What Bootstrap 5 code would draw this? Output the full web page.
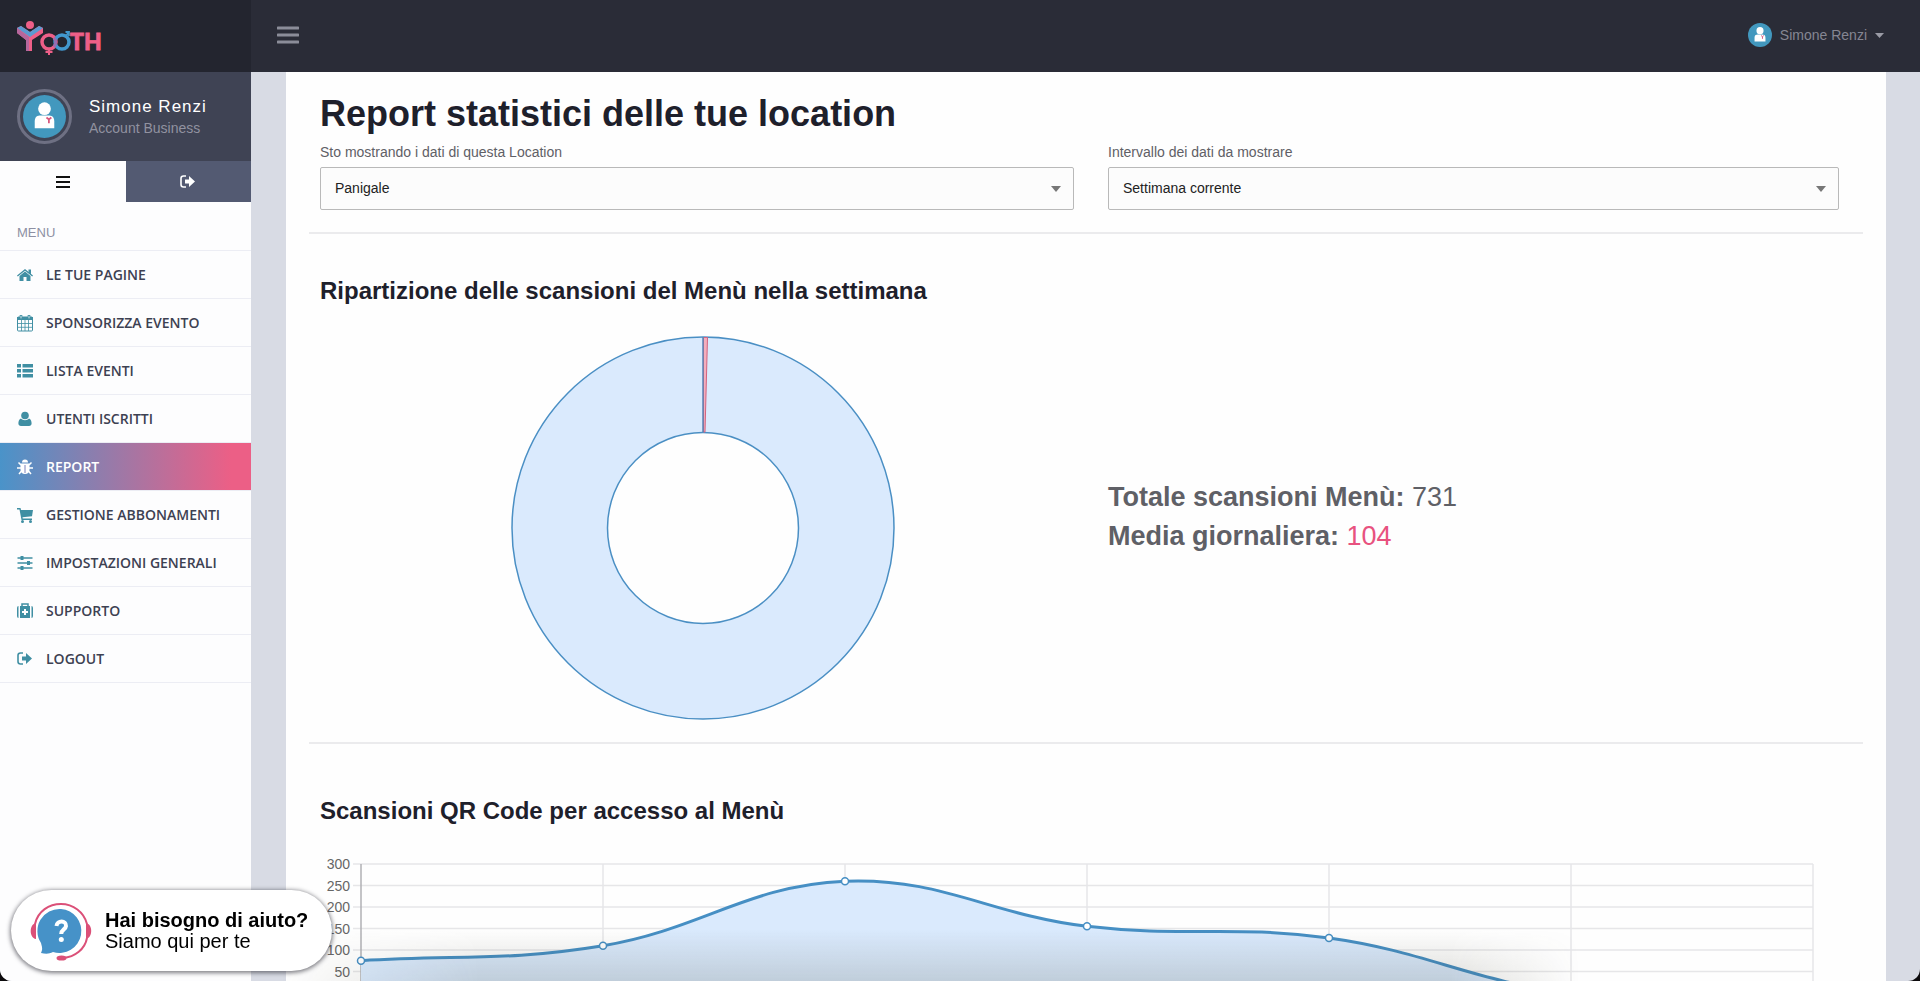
<!DOCTYPE html>
<html lang="it">
<head>
<meta charset="utf-8">
<meta name="viewport" content="width=device-width, initial-scale=1">
<title>Yooth - Report</title>
<link href="https://cdn.jsdelivr.net/npm/bootstrap@5.3.0/dist/css/bootstrap.min.css" rel="stylesheet">
<style>
html { background: #0c0a0c; height: 100%; overflow: hidden; }
body { font-family: "Liberation Sans", Arial, sans-serif; font-size: 14px; color: #5f6066; background: #d8dbe4; height: 100%; overflow: hidden; border-radius: 0 0 12px 12px; }
.side { width: 251px; background: #fdfdfe; flex: none; }
.brand { height: 72px; background: #23252f; padding: 20px 16px 0; }
.topbar { height: 72px; background: #2a2c37; padding: 0 36px 2px 24px; flex: none; }
.topbar .toggle { width: 24px; height: 20px; }
.who { color: #858692; }
.profile { height: 89px; background: #3f4354; padding: 0 17px; gap: 17px; }
.profile .name { font-size: 17px; line-height: 22px; letter-spacing: 1px; color: #fff; }
.profile .role { line-height: 20px; color: #9192a0; }
.ring { width: 55px; height: 55px; border: 3px solid #6e7083; border-radius: 50%; padding: 3px; }
.ring svg, .who svg { display: block; }
.tabs2 button { height: 41px; border: 0; background: #fdfdfe; color: #111; }
.tabs2 button + button { background: #535a72; color: #fff; }
.menu-title { height: 49px; padding: 20px 17px 0; font-size: 13px; line-height: 22px; color: #8d90a3; border-bottom: 1px solid #ecedf4; }
.side-menu a { display: flex; align-items: center; gap: 12px; height: 48px; padding: 0 16px; font: 600 14px "Open Sans", sans-serif; color: #3d4152; text-decoration: none; border-bottom: 1px solid #ecedf4; }
.side-menu a svg { width: 18px; height: 18px; color: #408fa3; flex: none; }
.side-menu a.active { color: #fff; background: linear-gradient(90deg, #4a93c9, #ec5f86 92%); }
.side-menu a.active svg { color: #fff; }
.sheet { background: #fefefe; margin: 0 34px 0 35px; padding: 0 23px; min-height: 0; overflow: hidden; }
.cell-l { padding-left: 11px; }
.cell-r { padding: 0 24px 0 22px; }
h1 { font-size: 36px; font-weight: 700; line-height: 44px; color: #1e202b; padding: 20px 11px 0; margin: 0 0 7px; }
h2 { font-size: 24px; font-weight: 700; line-height: 30px; color: #1e202b; padding: 0 11px; margin: 42px 0 30px; }
h2.later { margin: 52px 0 24px; }
.cell-l .form-select { width: calc(100% - 12px); }
.form-label { line-height: 18px; margin: 0 0 6px; display: block; }
.form-select { height: 43px; border: 1px solid #b9b9b9; border-radius: 2px; font-size: 14px; color: #222; padding: 0 32px 0 14px; background-color: #fcfcfc; background-image: url("data:image/svg+xml,%3Csvg xmlns='http://www.w3.org/2000/svg' viewBox='0 0 10 6'%3E%3Cpath d='M0 0h10L5 6z' fill='%23777'/%3E%3C/svg%3E"); background-size: 10px 6px; background-position: right 12px center; }
.rule { height: 2px; background: #ebebed; margin: 22px 0 0; }
.donut { width: 384px; max-width: 100%; height: auto; display: block; margin: 0 auto; }
.totals { font-size: 27px; line-height: 39px; padding-bottom: 22px; }
.totals .pink { color: #e8527f; }
.trend { display: block; width: 100%; height: auto; overflow: visible; font-family: "Liberation Sans", Arial, sans-serif; font-size: 14px; fill: #666; }
.help { position: fixed; left: 11px; bottom: 10px; height: 81px; width: 321px; border: 0; border-radius: 41px; background: #fff; box-shadow: 0 1px 4px 1px rgba(40,40,50,.6); padding: 0 16px 0 18px; gap: 10px; color: #000; text-align: left; font-size: 20px; line-height: 21px; }
.shade { position: fixed; left: 0; right: 340px; bottom: 0; height: 52px; pointer-events: none; background: linear-gradient(rgba(60,60,40,0), rgba(60,60,40,.16)); -webkit-mask-image: linear-gradient(90deg, transparent 280px, #000 480px, #000 calc(100% - 130px), transparent); mask-image: linear-gradient(90deg, transparent 280px, #000 480px, #000 calc(100% - 130px), transparent); }
</style>
</head>
<body class="d-flex">
<svg width="0" height="0" class="position-absolute" aria-hidden="true">
  <symbol id="avatar" viewBox="0 0 44 44"><circle cx="22" cy="22" r="22" fill="#4298be"/><circle cx="22" cy="14" r="6.500" fill="#fff"/><path d="M12 34v-7c0-5 3-6 6-6h8c3 0 6 1 6 6v7z" fill="#fff"/><path d="M24 23l2.500 2 2.500-2M26.500 25v4" stroke="#d9577c" stroke-width="1.800" fill="none"/></symbol>
  <symbol id="out" viewBox="0 0 18 18"><path d="M7 3H4.500A2.500 2.500 0 0 0 2 5.500v6A2.500 2.500 0 0 0 4.500 14H7" fill="none" stroke="currentColor" stroke-width="1.600"/><path d="M6 6.500h4V3l6 5.500-6 5.500v-3.500H6z" fill="currentColor"/></symbol>
</svg>

<aside class="side d-flex flex-column">
  <a class="brand d-block" href="#" aria-label="Yooth">
    <svg width="88" height="37" viewBox="0 0 88 37">
      <path d="M1 8l4-2 9 6 9-6 4 2v5l-11 7v11h-6V20L1 13z" fill="#ee5f88"/>
      <path d="M1 8l4-2 9 6 9-6 4 2-13 9z" fill="#5b9bd0"/>
      <path d="M1 8v5l9 7v11h3V17z" fill="#b5679d"/>
      <circle cx="14" cy="5" r="4" fill="#ee5f88"/>
      <circle cx="33" cy="22" r="7" fill="none" stroke="#ee5f88" stroke-width="3.500"/>
      <path d="M33 29v6M29.500 32h7" stroke="#ee5f88" stroke-width="2"/>
      <circle cx="46" cy="22" r="7" fill="none" stroke="#4298cf" stroke-width="3.500"/>
      <path d="M38 18a7 7 0 0 1 0 9" fill="none" stroke="#9a6cb0" stroke-width="3"/>
      <path d="M49 17l4-5M49.500 12H53v4" stroke="#4298cf" stroke-width="1.800" fill="none"/>
      <text x="54" y="30" font-family="Lato, sans-serif" font-weight="900" font-size="23" fill="#ee5f88" stroke="#ee5f88" stroke-width=".8">TH</text>
    </svg>
  </a>
  <div class="profile d-flex align-items-center">
    <div class="ring"><svg width="43" height="43"><use href="#avatar"/></svg></div>
    <div><div class="name">Simone Renzi</div><div class="role">Account Business</div></div>
  </div>
  <div class="tabs2 d-flex">
    <button class="w-50" type="button" aria-label="Menu"><svg width="14" height="12"><path d="M0 1h14M0 6h14M0 11h14" stroke="currentColor" stroke-width="2"/></svg></button>
    <button class="w-50" type="button" aria-label="Esci"><svg width="18" height="18"><use href="#out"/></svg></button>
  </div>
  <div class="menu-title">MENU</div>
  <nav class="side-menu">
    <a href="#"><svg viewBox="0 0 18 18" fill="currentColor"><path d="M9 5.500L3.500 10v5h4v-4h3v4h4v-5z"/><path d="M1 9.500L9 3l8 6.500-.8.900L9 4.700 1.800 10.400z"/><path d="M12.500 3.500h2.500v5l-2.500-2z"/></svg>LE TUE PAGINE</a>
    <a href="#"><svg viewBox="0 0 18 18" fill="none" stroke="currentColor"><rect x="1.500" y="3" width="15" height="14" rx="1"/><path d="M1 4.500h16" stroke-width="3"/><path d="M5.500 6v11M9 6v11M12.500 6v11M1 9.500h16M1 13.300h16" stroke-width=".8"/><path d="M5 1v4M13 1v4" stroke-width="2.600"/><path d="M5 1.800v2.600M13 1.800v2.600" stroke="#fff" stroke-width=".8"/></svg>SPONSORIZZA EVENTO</a>
    <a href="#"><svg viewBox="0 0 18 18" fill="currentColor"><path d="M1 2h4v3.500H1zM6.500 2H17v3.500H6.500zM1 7h4v3.500H1zM6.500 7H17v3.500H6.500zM1 12h4v3.500H1zM6.500 12H17v3.500H6.500z"/></svg>LISTA EVENTI</a>
    <a href="#"><svg viewBox="0 0 18 18" fill="currentColor"><circle cx="9" cy="5.500" r="3.800"/><path d="M5 8.500c2 2.200 6 2.200 8 0 2 .8 2.600 3 2.600 5 0 1.500-1 2.500-2.600 2.500H5c-1.600 0-2.600-1-2.600-2.500 0-2 .6-4.200 2.600-5z"/></svg>UTENTI ISCRITTI</a>
    <a href="#" class="active"><svg viewBox="0 0 18 18"><path d="M6 4.500a3 3 0 0 1 6 0zM4.500 5.500h9v6c0 3-2 4.500-4.500 4.500s-4.500-1.500-4.500-4.500z" fill="currentColor"/><path d="M5 7L2.500 4.500M13 7l2.500-2.500M5 10H1M13 10h4M5.500 13L3 16M12.500 13l2.500 3" stroke="currentColor" stroke-width="1.500"/><path d="M9 7v8" stroke="#7d82bb"/></svg>REPORT</a>
    <a href="#"><svg viewBox="0 0 18 18" fill="currentColor"><path d="M1 2h3.500l.5 2h12l-1 6.300-9.500 1 .2 1.200H16V14H5.500L3.500 3.500H1z"/><circle cx="6.500" cy="15.500" r="1.500"/><circle cx="14.500" cy="15.500" r="1.500"/></svg>GESTIONE ABBONAMENTI</a>
    <a href="#"><svg viewBox="0 0 18 18" fill="none" stroke="currentColor"><path d="M1.500 4h15M1.500 9h15M1.500 14h15" stroke-width="1.500"/><path d="M6 2v4M12.500 7v4M6 12v4" stroke-width="3"/></svg>IMPOSTAZIONI GENERALI</a>
    <a href="#"><svg viewBox="0 0 18 18" fill="currentColor"><path d="M1 6q0-2 1.500-2v12Q1 16 1 14zM17 6q0-2-1.500-2v12q1.500 0 1.500-2z"/><path d="M4 4h10v12H4z"/><path d="M6 4.500V2h6v2.500" fill="none" stroke="currentColor" stroke-width="1.500"/><path d="M9 7v6M6 10h6" stroke="#fff" stroke-width="2"/></svg>SUPPORTO</a>
    <a href="#"><svg><use href="#out"/></svg>LOGOUT</a>
  </nav>
</aside>

<div class="flex-grow-1 d-flex flex-column" style="min-width:0">
  <header class="topbar d-flex align-items-center justify-content-between">
    <button type="button" class="toggle border-0 p-0 bg-transparent d-flex align-items-center justify-content-end" aria-label="Apri menu"><svg width="22" height="18"><path d="M1 2h20M1 9h20M1 16h20" stroke="#8b8d99" stroke-width="3" stroke-linecap="round"/></svg></button>
    <a href="#" class="who d-flex align-items-center text-decoration-none"><svg width="24" height="24" class="me-2"><use href="#avatar"/></svg>Simone Renzi<svg width="9" height="5" class="ms-2"><path d="M0 0h9L4.500 5z" fill="#9a9ba5"/></svg></a>
  </header>

  <main class="sheet flex-grow-1">
    <h1>Report statistici delle tue location</h1>
    <div class="row g-0">
      <div class="col-6 cell-l"><label class="form-label" for="loc">Sto mostrando i dati di questa Location</label><select id="loc" class="form-select"><option>Panigale</option></select></div>
      <div class="col-6 cell-r"><label class="form-label" for="range">Intervallo dei dati da mostrare</label><select id="range" class="form-select"><option>Settimana corrente</option></select></div>
    </div>
    <div class="rule"></div>
    <h2>Ripartizione delle scansioni del Menù nella settimana</h2>
    <div class="row g-0 align-items-center">
      <div class="col-6 cell-l">
        <svg class="donut" viewBox="0 0 384 384">
          <circle cx="192" cy="192" r="143.500" fill="none" stroke="#daeafd" stroke-width="95"/>
          <circle cx="192" cy="192" r="191" fill="none" stroke="#4a8fc4" stroke-width="1.500"/>
          <circle cx="192" cy="192" r="95.500" fill="none" stroke="#4a8fc4" stroke-width="1.500"/>
          <path d="M192.500 1.500h4L194 96h-1.500z" fill="#f4aebd" stroke="#d3637f"/>
          <path d="M192 1v95" stroke="#5a83b4" stroke-width="1.500"/>
        </svg>
      </div>
      <div class="col-6 cell-r totals">
        <div><strong>Totale scansioni Menù:</strong> 731</div>
        <div><strong>Media giornaliera:</strong> <span class="pink">104</span></div>
      </div>
    </div>
    <div class="rule"></div>
    <h2 class="later">Scansioni QR Code per accesso al Menù</h2>
    <div class="cell-l"><svg id="trend" class="trend" viewBox="0 0 1543 180"></svg></div>
  </main>
</div>

<div class="shade"></div>
<button type="button" class="help d-flex align-items-center">
  <svg width="66" height="62" viewBox="0 0 66 62" class="flex-shrink-0">
    <path d="M32 9a22 22 0 1 1-8 43c-4 2-7 2-12 1 2-4 1-6 0-10A22 22 0 0 1 32 9z" fill="#4692c8"/>
    <path d="M6 24C9 11 20 4 32 4s23 8 26 20M58 38C56 49 46 57 34 58" fill="none" stroke="#db5078" stroke-width="2"/>
    <path d="M7 23c-7 1-7 15 0 16zM57 23c7 1 7 15 0 16z" fill="#db5078"/><ellipse cx="32.500" cy="58" rx="5" ry="2.600" fill="#db5078"/>
    <path d="M27.500 26c.5-6 10-6 9.500 0-.3 3.500-4.800 3.500-4.800 8" fill="none" stroke="#fff" stroke-width="4"/><circle cx="32.300" cy="39.500" r="2.500" fill="#fff"/>
  </svg>
  <span><strong>Hai bisogno di aiuto?</strong><br>Siamo qui per te</span>
</button>

<script src="https://cdn.jsdelivr.net/npm/bootstrap@5.3.0/dist/js/bootstrap.bundle.min.js"></script>
<script>
const data = [75, 110, 260, 155, 128, 0, 0];
const left = 41, step = 242, top0 = 14, bottom = 143, tension = 0.4;
const x = i => left + i * step, y = v => bottom - v * (bottom - top0) / 300;
let out = '';
for (let v = 0; v <= 300; v += 50) {
  out += `<path d="M${left - 8} ${y(v)}H${x(6)}" stroke="#e6e6e8" stroke-width="1.5"/>`;
  if (v) out += `<text x="30" y="${y(v) + 5}" text-anchor="end">${v}</text>`;
}
for (let i = 0; i < 7; i++) out += `<path d="M${x(i)} ${top0}V${bottom + 8}" stroke="${i ? '#e6e6e8' : '#b0b0b4'}" stroke-width="1.5"/>`;
// smoothed line: control points follow the slope between each point's neighbours
const at = i => y(data[Math.min(6, Math.max(0, i))]);
const slope = i => (at(i + 1) - at(i - 1)) * tension / (i % 6 ? 2 : 1);
let line = `M${x(0)} ${at(0)}`;
for (let i = 0; i < 6; i++) {
  line += `C${x(i) + step * tension} ${at(i) + slope(i)} ${x(i + 1) - step * tension} ${at(i + 1) - slope(i + 1)} ${x(i + 1)} ${at(i + 1)}`;
}
out += `<path d="${line}V${bottom}H${left}Z" fill="#daeafd"/><path d="${line}" fill="none" stroke="#468fc4" stroke-width="3"/>`;
data.forEach((v, i) => out += `<circle cx="${x(i)}" cy="${y(v)}" r="3.500" fill="#fff" stroke="#468fc4" stroke-width="1.500"/>`);
document.getElementById('trend').innerHTML = out;
</script>
</body>
</html>
